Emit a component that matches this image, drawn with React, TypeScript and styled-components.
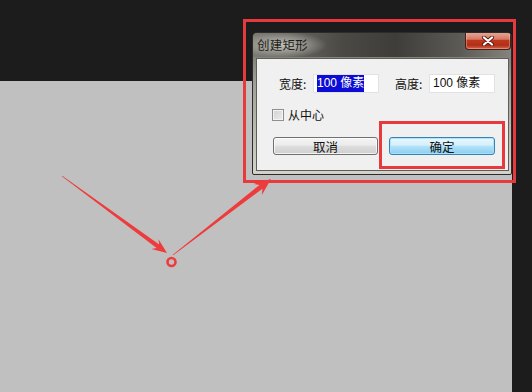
import React from "react";
import styled, { createGlobalStyle } from "styled-components";

const Global = createGlobalStyle`
  html, body { margin: 0; padding: 0; }
  body { width: 532px; height: 392px; overflow: hidden; background: #1c1c1c; }
  #root { width: 532px; height: 392px; }
`;

const FONT = `"Liberation Sans", "Noto Sans CJK SC", sans-serif`;

const Screen = styled.div`
  position: relative;
  width: 532px;
  height: 392px;
  box-sizing: border-box;
  padding: 81px 20px 0 0;
  background: #1c1c1c;
  font-family: ${FONT};
`;

const Canvas = styled.div`
  height: 100%;
  background: #c0c0c0;
`;

const Dialog = styled.div`
  position: absolute;
  left: 252px;
  top: 32px;
  width: 260px;
  height: 143px;
  box-sizing: border-box;
  border: 1px solid #2c2c2a;
  border-radius: 5px 5px 2px 2px;
  background: linear-gradient(to bottom, #6a6862 0%, #a09e98 35%, #d4d2ca 100%);
  display: flex;
  flex-direction: column;
  overflow: hidden;
`;

const TitleBar = styled.div`
  height: 24px;
  display: flex;
  align-items: flex-start;
  background:
    radial-gradient(ellipse 44px 13px at 30px 12px, rgba(200, 200, 190, 0.95), rgba(200, 200, 190, 0) 100%),
    linear-gradient(to right, #7c7a74 0%, #4a4944 35%, #3e3d39 55%, #5c5a55 80%, #85837e 100%);
`;

const Title = styled.span`
  font-family: "Noto Sans CJK SC", sans-serif;
  font-size: 12.5px;
  line-height: 24px;
  color: #1e1e1c;
  padding-left: 4px;
  letter-spacing: 0.2px;
`;

const CloseButton = styled.div`
  margin-left: auto;
  margin-top: -1px;
  width: 46px;
  height: 18px;
  box-sizing: border-box;
  border: 1px solid #4a1e14;
  border-top: none;
  border-radius: 0 0 4px 4px;
  background: linear-gradient(to bottom, #e8aa9a 0%, #d67a66 42%, #c2361c 50%, #b0301a 78%, #d86848 100%);
  box-shadow: inset 0 0 0 1px rgba(255, 220, 210, 0.35);
  display: flex;
  align-items: center;
  justify-content: center;
`;

const Panel = styled.div`
  flex: 1;
  margin: 1px 2px 3px 3px;
  border: 1px solid #5e5d58;
  background: #f0f0f0;
  display: flex;
  flex-direction: column;
  padding: 15px 0 0 0;
  box-sizing: border-box;
`;

const FieldRow = styled.div`
  display: flex;
  align-items: center;
  height: 19px;
  padding-left: 22px;
  gap: 16px;
`;

const Field = styled.div`
  display: flex;
  align-items: center;
  gap: 4px;
`;

const Label = styled.span`
  width: 30px;
  font-family: "Noto Sans CJK SC", sans-serif;
  font-size: 12px;
  color: #111;
  white-space: nowrap;
`;

const Input = styled.div`
  width: 66px;
  height: 19px;
  box-sizing: border-box;
  background: #fff;
  border: 1px solid #e2e2e2;
  padding-left: 3px;
  display: flex;
  align-items: center;
  font-size: 12px;
  color: #111;
  white-space: nowrap;
`;

const Value = styled.span<{ $selected?: boolean }>`
  font-family: ${FONT};
  line-height: 17px;
  background: ${(p) => (p.$selected ? "#0c0cd6" : "transparent")};
  color: ${(p) => (p.$selected ? "#fff" : "#111")};
`;

const CheckRow = styled.label`
  display: flex;
  align-items: center;
  gap: 4px;
  margin-top: 16px;
  padding-left: 15px;
  height: 12px;
  line-height: 12px;
  font-family: "Noto Sans CJK SC", sans-serif;
  font-size: 12px;
  color: #111;
`;

const CheckBox = styled.span`
  width: 12px;
  height: 12px;
  box-sizing: border-box;
  border: 1px solid #8e8f8f;
  background: linear-gradient(135deg, #d2d2d2 0%, #ececec 100%);
  box-shadow: inset 0 0 0 1px #f4f4f4;
`;

const ButtonRow = styled.div`
  display: flex;
  gap: 11px;
  margin-top: 16px;
  padding-left: 16px;
`;

const Button = styled.div<{ $primary?: boolean }>`
  width: ${(p) => (p.$primary ? 106 : 105)}px;
  height: 18px;
  box-sizing: border-box;
  border-radius: 3px;
  border: 1px solid ${(p) => (p.$primary ? "#3c7fb1" : "#707070")};
  background: ${(p) =>
    p.$primary
      ? "linear-gradient(to bottom, #eaf7fd 0%, #d4effc 45%, #b2e2f8 52%, #8ccdf0 100%)"
      : "linear-gradient(to bottom, #f4f4f4 0%, #ebebeb 45%, #dddddd 52%, #cfcfcf 100%)"};
  box-shadow: ${(p) =>
    p.$primary ? "inset 0 0 0 1px rgba(160, 230, 255, 0.9)" : "inset 0 0 0 1px rgba(255,255,255,0.7)"};
  display: flex;
  align-items: center;
  justify-content: center;
  font-family: "Noto Sans CJK SC", sans-serif;
  font-size: 12.5px;
  color: #111;
`;

const Frame = styled.div<{ $x: number; $y: number; $w: number; $h: number }>`
  position: absolute;
  left: ${(p) => p.$x}px;
  top: ${(p) => p.$y}px;
  width: ${(p) => p.$w}px;
  height: ${(p) => p.$h}px;
  box-sizing: border-box;
  border: 3px solid #e63a3c;
  pointer-events: none;
`;

const Overlay = styled.svg`
  position: absolute;
  left: 0;
  top: 0;
  pointer-events: none;
`;

type P = [number, number];

function arrowPoints(start: P, tip: P, headLen: number, headHalf: number, shaftEnd: number): string {
  const dx = tip[0] - start[0];
  const dy = tip[1] - start[1];
  const len = Math.hypot(dx, dy);
  const ux = dx / len;
  const uy = dy / len;
  const nx = -uy;
  const ny = ux;
  const base: P = [tip[0] - ux * headLen, tip[1] - uy * headLen];
  const neck: P = [tip[0] - ux * headLen * 0.75, tip[1] - uy * headLen * 0.75];
  const pts: P[] = [
    [start[0] + nx * 0.4, start[1] + ny * 0.4],
    [neck[0] + nx * shaftEnd, neck[1] + ny * shaftEnd],
    [base[0] + nx * headHalf, base[1] + ny * headHalf],
    tip,
    [base[0] - nx * headHalf, base[1] - ny * headHalf],
    [neck[0] - nx * shaftEnd, neck[1] - ny * shaftEnd],
    [start[0] - nx * 0.4, start[1] - ny * 0.4],
  ];
  return pts.map((p) => `${p[0].toFixed(1)},${p[1].toFixed(1)}`).join(" ");
}

export default function App() {
  return (
    <>
      <Global />
      <Screen>
        <Canvas />
        <Dialog>
          <TitleBar>
            <Title>创建矩形</Title>
            <CloseButton>
              <svg width="12" height="10" viewBox="0 0 12 10">
                <path d="M2 1.5 L10 8.5 M10 1.5 L2 8.5" stroke="#5a1a10" strokeWidth="4" strokeLinecap="round" />
                <path d="M2 1.5 L10 8.5 M10 1.5 L2 8.5" stroke="#ffffff" strokeWidth="2.2" strokeLinecap="round" />
              </svg>
            </CloseButton>
          </TitleBar>
          <Panel>
            <FieldRow>
              <Field>
                <Label>宽度:</Label>
                <Input>
                  <Value $selected>100 像素</Value>
                </Input>
              </Field>
              <Field>
                <Label>高度:</Label>
                <Input>
                  <Value>100 像素</Value>
                </Input>
              </Field>
            </FieldRow>
            <CheckRow>
              <CheckBox />
              从中心
            </CheckRow>
            <ButtonRow>
              <Button>取消</Button>
              <Button $primary>确定</Button>
            </ButtonRow>
          </Panel>
        </Dialog>
        <Frame $x={243} $y={19} $w={273} $h={164} />
        <Frame $x={379} $y={121} $w={126} $h={48} />
        <Overlay width="532" height="392" viewBox="0 0 532 392">
          <polygon points={arrowPoints([62, 176], [167, 253], 15, 6, 2.2)} fill="#ee3b3b" />
          <polygon points={arrowPoints([173, 255], [271, 179], 17, 7, 2.4)} fill="#ee3b3b" />
          <circle cx="171.5" cy="262" r="4" fill="none" stroke="#ee3b3b" strokeWidth="2.6" />
        </Overlay>
      </Screen>
    </>
  );
}
